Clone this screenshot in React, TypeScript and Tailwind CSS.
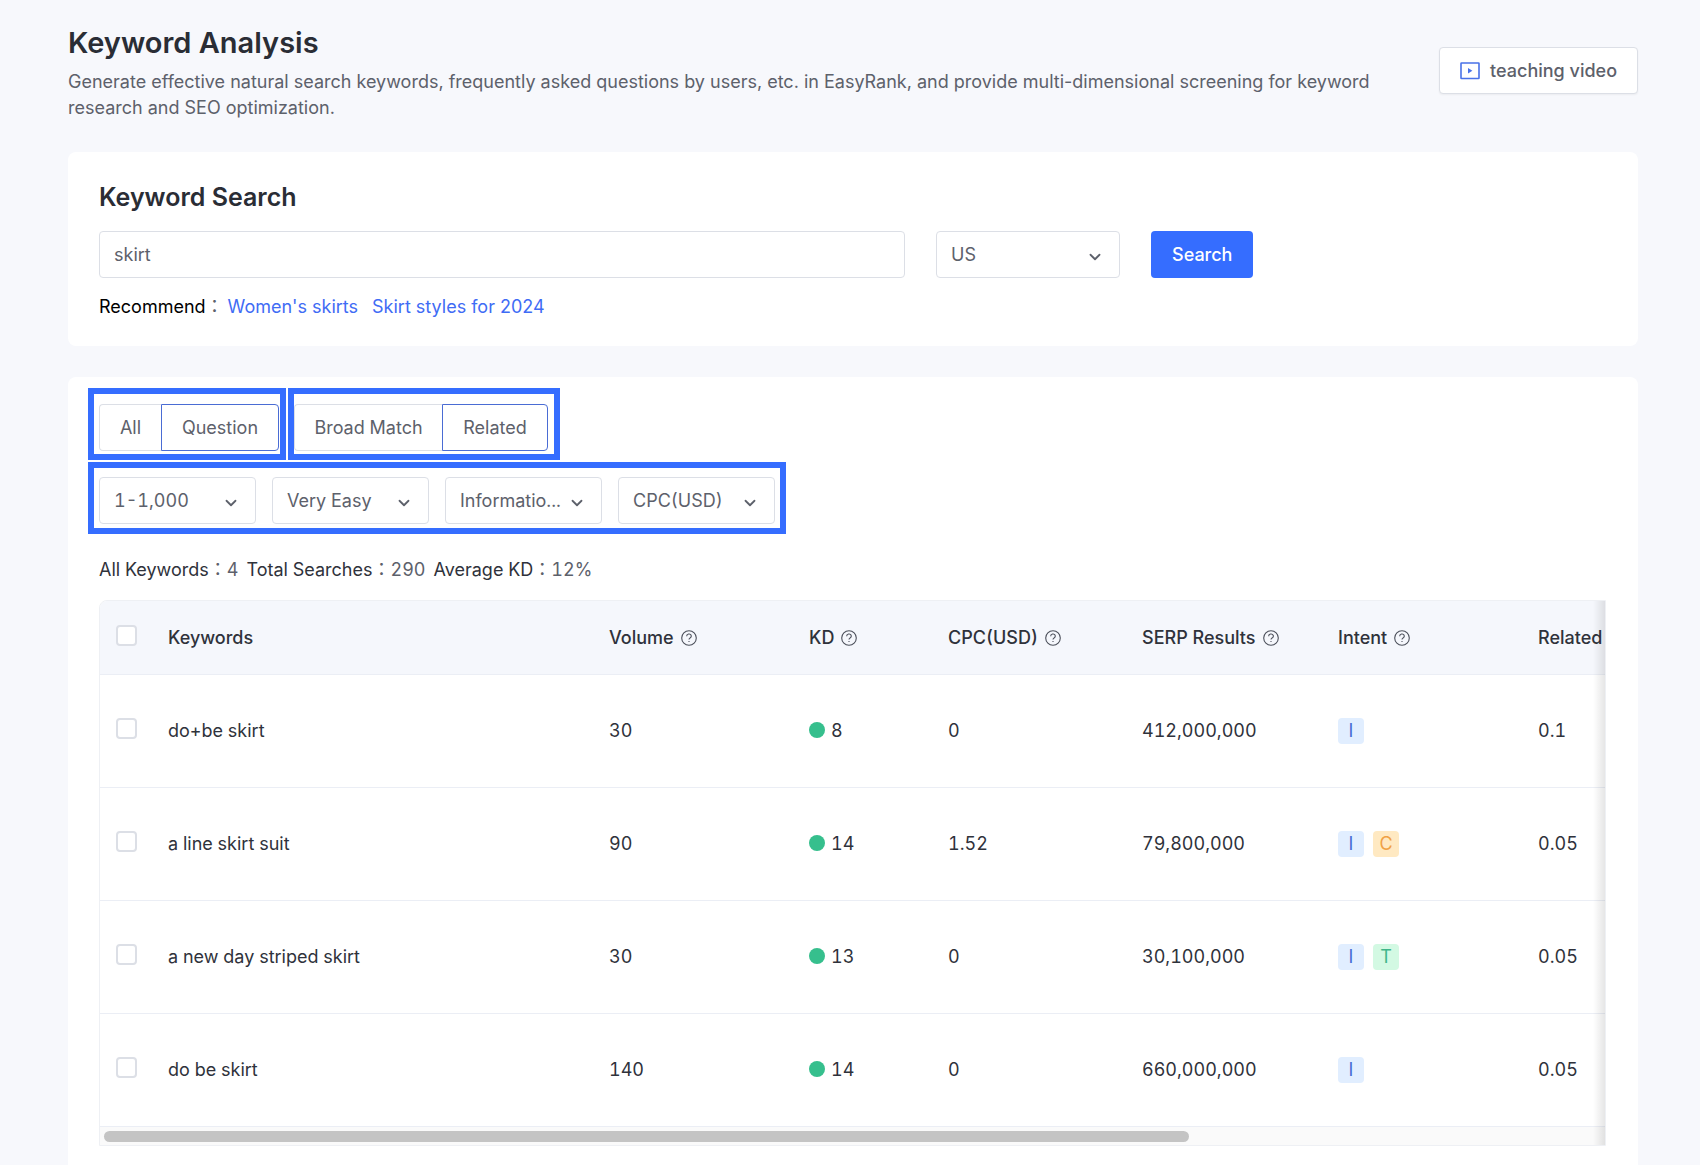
import React from "react";
import { ChevronDown } from "lucide-react";

const FONT = "font-['Inter','Noto_Sans_CJK_TC',sans-serif]";

function HelpIcon() {
  return (
    <svg className="size-4 shrink-0" viewBox="0 0 16 16" fill="none" stroke="#4b4f5a" strokeWidth="1.1" aria-hidden="true">
      <circle cx="8" cy="8" r="7.3" />
      <path d="M5.7 6.2a2.3 2.1 0 1 1 3.4 1.7c-.7.4-1.1.7-1.1 1.5" />
      <path d="M8 10.9v1.2" />
    </svg>
  );
}

function Dropdown({ label, options, className }: { label: string; options: string[]; className: string }) {
  return (
    <div className={"relative shrink-0 " + className}>
      <select
        aria-label={label}
        className="block h-[47px] w-full appearance-none rounded border border-[#dcdfe6] bg-white pl-[14px] pr-9 text-lg text-[#5d616b]"
      >
        {options.map((o) => (
          <option key={o}>{o}</option>
        ))}
      </select>
      <ChevronDown className="pointer-events-none absolute right-4 top-[17px] size-[18px] text-[#5d616b]" strokeWidth={2.4} />
    </div>
  );
}

const columns = [
  { name: "Volume", help: true, width: "w-[200px]" },
  { name: "KD", help: true, width: "w-[139px]" },
  { name: "CPC(USD)", help: true, width: "w-[194px]" },
  { name: "SERP Results", help: true, width: "w-[196px]" },
  { name: "Intent", help: true, width: "w-[200px]" },
  { name: "Related", help: false, width: "w-[83px]" },
];

const rows = [
  { keyword: "do+be skirt", volume: "30", kd: "8", cpc: "0", serp: "412,000,000", intent: ["I"], related: "0.1" },
  { keyword: "a line skirt suit", volume: "90", kd: "14", cpc: "1.52", serp: "79,800,000", intent: ["I", "C"], related: "0.05" },
  { keyword: "a new day striped skirt", volume: "30", kd: "13", cpc: "0", serp: "30,100,000", intent: ["I", "T"], related: "0.05" },
  { keyword: "do be skirt", volume: "140", kd: "14", cpc: "0", serp: "660,000,000", intent: ["I"], related: "0.05" },
];

const tagStyle: Record<string, string> = {
  I: "bg-[#e1eeff] text-[#4a6cd4]",
  C: "bg-[#ffe9c2] text-[#f0a145]",
  T: "bg-[#d3f9e3] text-[#3fb58a]",
};

function Check({ label }: { label: string }) {
  return (
    <input
      type="checkbox"
      aria-label={label}
      className="block size-[21px] appearance-none rounded border-2 border-[#dcdfe6] bg-white checked:bg-[#356dff]"
    />
  );
}

const segment = "h-[47px] border text-lg text-[#5d616b] bg-white";

export default function App() {
  return (
    <div className={"flex min-h-screen flex-col bg-[#f7f8fc] pl-[68px] pr-[62px] pt-6 " + FONT}>
      <header className="flex items-start justify-between">
        <div className="max-w-[1310px]">
          <h1 className="text-[29px] font-semibold leading-[38px] text-[#2a2d35]">Keyword Analysis</h1>
          <p className="mt-[7px] text-lg leading-[26px] text-[#5d616b]">
            Generate effective natural search keywords, frequently asked questions by users, etc. in EasyRank, and
            provide multi-dimensional screening for keyword research and SEO optimization.
          </p>
        </div>
        <button
          type="button"
          className="mt-[23px] flex h-[47px] shrink-0 items-center gap-2.5 rounded border border-[#dcdfe6] bg-white px-5 text-lg font-medium text-[#5d616b] shadow-xs"
        >
          <svg className="h-[18px] w-5" viewBox="0 0 20 18" fill="none" aria-hidden="true">
            <rect x="1" y="1" width="18" height="15.5" rx="0.5" stroke="#4a72e8" strokeWidth="1.6" />
            <path d="M8 6l4.4 2.8L8 11.6z" fill="#4a72e8" />
          </svg>
          teaching video
        </button>
      </header>

      <section className="mt-[31px] rounded-lg bg-white pb-[26px] pl-[31px] pr-8 pt-[29px]">
        <h2 className="text-[25px] font-semibold leading-8 text-[#2a2d35]">Keyword Search</h2>
        <form className="mt-[18px] flex gap-[31px]" onSubmit={(e) => e.preventDefault()}>
          <input
            aria-label="Keyword"
            defaultValue="skirt"
            className="h-[47px] w-[806px] min-w-0 rounded border border-[#dcdfe6] bg-white px-[14px] text-lg text-[#5d616b]"
          />
          <Dropdown label="Country" options={["US"]} className="w-[184px]" />
          <button type="submit" className="h-[47px] shrink-0 rounded bg-[#356dff] px-[21px] text-lg font-medium text-white">
            Search
          </button>
        </form>
        <div className="mt-4 flex text-lg leading-[26px] text-black">
          <span>Recommend<span className="text-[#5d616b]">：</span></span>
          <a href="#womens-skirts" className="ml-1 text-[#3f6cf5]">Women's skirts</a>
          <a href="#skirt-styles" className="ml-[14px] text-[#3f6cf5]">Skirt styles for 2024</a>
        </div>
      </section>

      <section className="mt-[31px] flex-1 rounded-t-lg bg-white pb-5 pl-[31px] pr-8 pt-[11px] tabular-nums">
        <div className="-mx-[11px] flex flex-col items-start gap-0.5">
          <div className="flex gap-0.5">
            <div className="flex h-[72px] items-center border-6 border-[#356dff] pl-[5px] pr-px pt-[7px]">
              <button type="button" className={segment + " w-[62px] rounded-l border-r-0 border-[#dcdfe6]"}>All</button>
              <button type="button" className={segment + " w-[118px] rounded-r border-[#4a6cd4]"}>Question</button>
            </div>
            <div className="flex h-[72px] items-center border-6 border-[#356dff] pr-[6px] pt-[7px]">
              <button type="button" className={segment + " w-[148px] rounded-l border-r-0 border-[#dcdfe6]"}>Broad Match</button>
              <button type="button" className={segment + " w-[106px] rounded-r border-[#4a6cd4]"}>Related</button>
            </div>
          </div>
          <div className="flex h-[72px] items-center gap-4 border-6 border-[#356dff] px-[5px] pt-[5px]">
            <Dropdown label="Volume" options={["1-1,000"]} className="w-[157px]" />
            <Dropdown label="Difficulty" options={["Very Easy"]} className="w-[157px]" />
            <Dropdown label="Intent" options={["Informatio..."]} className="w-[157px]" />
            <Dropdown label="CPC" options={["CPC(USD)"]} className="w-[157px]" />
          </div>
        </div>

        <div className="mt-6 flex gap-2 text-lg leading-6 text-[#2f323b]">
          <p>All Keywords<span className="text-[#5d616b]">：4</span></p>
          <p>Total Searches<span className="text-[#5d616b]">：290</span></p>
          <p>Average KD<span className="text-[#5d616b]">：12%</span></p>
        </div>

        <div className="relative mt-[18px] overflow-hidden rounded-tl-lg border border-[#eef0f4]">
          <table className="w-full table-fixed border-collapse text-left text-lg text-[#2f323b]">
            <thead>
              <tr className="h-[73px] border-b border-[#ebeef5] bg-[#f5f7fc]">
                <th className="w-[52px] pb-1 pl-4"><Check label="Select all keywords" /></th>
                <th className="px-4 pt-0.5 font-medium">Keywords</th>
                {columns.map((c) => (
                  <th key={c.name} className={"pl-4 pt-0.5 font-medium whitespace-nowrap " + c.width}>
                    <span className="flex items-center gap-[7px]">
                      {c.name}
                      {c.help && <HelpIcon />}
                    </span>
                  </th>
                ))}
              </tr>
            </thead>
            <tbody>
              {rows.map((r) => (
                <tr key={r.keyword} className="h-[113px] border-b border-[#ebeef5]">
                  <td className="pb-1 pl-4"><Check label={"Select " + r.keyword} /></td>
                  <td className="px-4">{r.keyword}</td>
                  <td className="pl-4">{r.volume}</td>
                  <td className="pl-4">
                    <span className="flex items-center gap-1.5">
                      <span className="mb-0.5 size-4 rounded-full bg-[#36bf8d]" />
                      {r.kd}
                    </span>
                  </td>
                  <td className="pl-4">{r.cpc}</td>
                  <td className="pl-4">{r.serp}</td>
                  <td className="pl-4">
                    <span className="flex gap-[9px]">
                      {r.intent.map((t) => (
                        <span key={t} className={"flex size-[26px] items-center justify-center rounded " + tagStyle[t]}>{t}</span>
                      ))}
                    </span>
                  </td>
                  <td className="pl-4">{r.related}</td>
                </tr>
              ))}
            </tbody>
          </table>
          <div className="bg-[#fafafa] px-1 pb-[3px] pt-1">
            <div className="h-[11px] w-[72.5%] rounded-full bg-[#c4c4c4]" />
          </div>
          <div className="pointer-events-none absolute inset-y-0 right-0 w-3 bg-linear-to-r from-transparent to-black/10" />
        </div>
      </section>
    </div>
  );
}
